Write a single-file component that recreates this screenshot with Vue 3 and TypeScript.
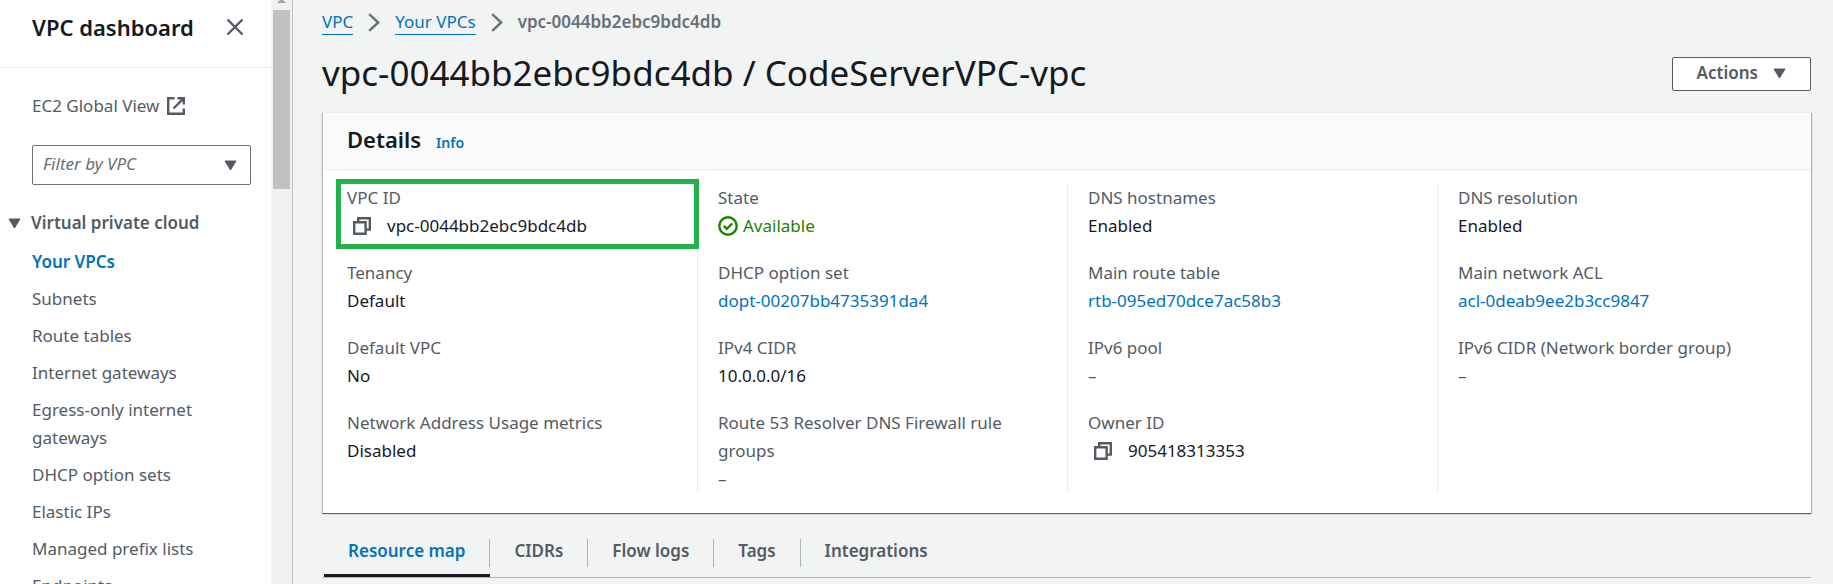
<script setup lang="ts">
import { ref } from 'vue'

interface Field {
  label: string
  value: string
  kind?: 'link' | 'copy' | 'status' | 'empty'
  highlighted?: boolean
}

const navItems: string[] = [
  'Your VPCs',
  'Subnets',
  'Route tables',
  'Internet gateways',
  'Egress-only internet gateways',
  'DHCP option sets',
  'Elastic IPs',
  'Managed prefix lists',
  'Endpoints',
]

const columns: Field[][] = [
  [
    { label: 'VPC ID', value: 'vpc-0044bb2ebc9bdc4db', kind: 'copy', highlighted: true },
    { label: 'Tenancy', value: 'Default' },
    { label: 'Default VPC', value: 'No' },
    { label: 'Network Address Usage metrics', value: 'Disabled' },
  ],
  [
    { label: 'State', value: 'Available', kind: 'status' },
    { label: 'DHCP option set', value: 'dopt-00207bb4735391da4', kind: 'link' },
    { label: 'IPv4 CIDR', value: '10.0.0.0/16' },
    { label: 'Route 53 Resolver DNS Firewall rule groups', value: '–', kind: 'empty' },
  ],
  [
    { label: 'DNS hostnames', value: 'Enabled' },
    { label: 'Main route table', value: 'rtb-095ed70dce7ac58b3', kind: 'link' },
    { label: 'IPv6 pool', value: '–', kind: 'empty' },
    { label: 'Owner ID', value: '905418313353', kind: 'copy' },
  ],
  [
    { label: 'DNS resolution', value: 'Enabled' },
    { label: 'Main network ACL', value: 'acl-0deab9ee2b3cc9847', kind: 'link' },
    { label: 'IPv6 CIDR (Network border group)', value: '–', kind: 'empty' },
  ],
]

const tabs: string[] = ['Resource map', 'CIDRs', 'Flow logs', 'Tags', 'Integrations']
const activeTab = ref('Resource map')
const activeNav = ref('Your VPCs')
const filter = ref('')
const sectionOpen = ref(true)

function copy(text: string): void {
  navigator.clipboard?.writeText(text)
}
</script>

<template>
  <div class="app">
    <aside class="sidebar">
      <div class="side-content">
        <header class="side-header">
          <h2>VPC dashboard</h2>
          <button class="icon-button" type="button" aria-label="Close navigation">
            <svg width="18" height="18" viewBox="0 0 18 18"><path d="M1.5 1.5l15 15M16.5 1.5l-15 15" fill="none" stroke="currentColor" stroke-width="2.4" /></svg>
          </button>
        </header>
        <a class="global" href="#">
          <span>EC2 Global View</span>
          <svg width="18" height="18" viewBox="0 0 18 18" fill="none" stroke="currentColor" stroke-width="2.4"><path d="M7.5 1.2H1.2v15.6h15.6v-5.3M10.5 1.2h6.3v6.3M16.6 1.4L6.5 11.5" /></svg>
        </a>
        <div class="filter">
          <select v-model="filter" aria-label="Filter by VPC">
            <option value="">Filter by VPC</option>
          </select>
          <svg width="13" height="11" viewBox="0 0 13 11"><path d="M1 1h11L6.5 10z" fill="currentColor" stroke="currentColor" stroke-linejoin="round" /></svg>
        </div>
        <button class="section" type="button" :aria-expanded="sectionOpen" @click="sectionOpen = !sectionOpen">
          <svg width="13" height="11" viewBox="0 0 13 11"><path d="M1 1h11L6.5 10z" fill="currentColor" stroke="currentColor" stroke-linejoin="round" /></svg>
          Virtual private cloud
        </button>
        <ul v-if="sectionOpen" class="nav">
          <li v-for="item in navItems" :key="item">
            <a href="#" :class="{ current: item === activeNav }" @click.prevent="activeNav = item">{{ item }}</a>
          </li>
        </ul>
      </div>
      <div class="scrollbar" aria-hidden="true">
        <svg width="9" height="3" viewBox="0 0 9 3"><path d="M3 0h3l3 3H0z" fill="#a3a3a3" /></svg>
        <div class="thumb"></div>
      </div>
    </aside>

    <main>
      <nav class="crumbs" aria-label="Breadcrumbs">
        <a href="#">VPC</a>
        <svg width="12" height="19" viewBox="0 0 12 19"><path d="M1.2 1.2L10.2 9.5L1.2 17.8" fill="none" stroke="currentColor" stroke-width="2.4" /></svg>
        <a href="#">Your VPCs</a>
        <svg width="12" height="19" viewBox="0 0 12 19"><path d="M1.2 1.2L10.2 9.5L1.2 17.8" fill="none" stroke="currentColor" stroke-width="2.4" /></svg>
        <span>vpc-0044bb2ebc9bdc4db</span>
      </nav>

      <div class="title-row">
        <h1>vpc-0044bb2ebc9bdc4db / CodeServerVPC-vpc</h1>
        <button class="actions" type="button">
          Actions
          <svg width="13" height="11" viewBox="0 0 13 11"><path d="M1 1h11L6.5 10z" fill="currentColor" stroke="currentColor" stroke-linejoin="round" /></svg>
        </button>
      </div>

      <section class="card">
        <header class="card-header">
          <h2>Details</h2>
          <a href="#">Info</a>
        </header>
        <div class="columns">
          <dl v-for="(column, index) in columns" :key="index" class="column">
            <div v-for="field in column" :key="field.label" class="field" :class="{ highlighted: field.highlighted }">
              <dt>{{ field.label }}</dt>
              <dd :class="field.kind">
                <a v-if="field.kind === 'link'" href="#">{{ field.value }}</a>
                <template v-else>
                  <button v-if="field.kind === 'copy'" class="icon-button" type="button" :aria-label="`Copy ${field.label}`" @click="copy(field.value)">
                    <svg width="18" height="18" viewBox="0 0 18 18" fill="none" stroke="currentColor" stroke-width="2.4"><path d="M1.2 5.2h11.4v11.6H1.2zM5.2 5.2V1.2h11.6v11.4h-4.2" /></svg>
                  </button>
                  <svg v-if="field.kind === 'status'" width="20" height="20" viewBox="0 0 20 20" fill="none" stroke="currentColor" stroke-width="2.4"><circle cx="10" cy="10" r="8.7" /><path d="M5.8 9.8l3 3 5.4-5.3" /></svg>
                  <span>{{ field.value }}</span>
                </template>
              </dd>
            </div>
          </dl>
        </div>
      </section>

      <div class="tabs" role="tablist">
        <button
          v-for="tab in tabs"
          :key="tab"
          type="button"
          role="tab"
          :aria-selected="tab === activeTab"
          :class="{ active: tab === activeTab }"
          @click="activeTab = tab"
        >
          <span>{{ tab }}</span>
        </button>
      </div>
    </main>
  </div>
</template>

<style>
body {
  margin: 0;
  overflow: hidden;
}
</style>

<style scoped>
.app {
  display: flex;
  height: 100vh;
  overflow: hidden;
  background: #f2f3f3;
  color: #16191f;
  font-family: 'Noto Sans', 'Open Sans', sans-serif;
  font-size: 17px;
  line-height: 28px;
}
* {
  box-sizing: border-box;
}
h1,
h2,
ul,
dl,
dd {
  margin: 0;
  padding: 0;
}
svg {
  display: block;
  flex: none;
}
a {
  color: #0073bb;
  text-decoration: none;
}
button,
select {
  font: inherit;
  color: #545b64;
  cursor: pointer;
}
.icon-button {
  display: flex;
  padding: 0;
  border: 0;
  background: none;
}

.sidebar {
  display: flex;
  flex: none;
  width: 293px;
  overflow: hidden;
  border-right: 1px solid #bcc4c6;
  background: #fff;
}
.side-content {
  flex: 1;
  color: #545b64;
}
.side-header {
  display: flex;
  align-items: center;
  justify-content: space-between;
  height: 68px;
  padding: 0 27px 13px 32px;
  border-bottom: 1px solid #eaeded;
}
.side-header h2 {
  color: #16191f;
  font-size: 22px;
  font-weight: 600;
  line-height: 26px;
}
.global {
  display: flex;
  align-items: center;
  gap: 8px;
  margin: 24px 20px 0 32px;
  color: #545b64;
}
.filter {
  position: relative;
  margin: 25px 20px 0 32px;
}
.filter select {
  display: block;
  width: 100%;
  height: 40px;
  padding: 0 32px 2px 10px;
  border: 1px solid #687078;
  border-radius: 2px;
  background: #fff;
  color: #687078;
  font-style: italic;
  appearance: none;
}
.filter svg {
  position: absolute;
  top: 15px;
  right: 14px;
  pointer-events: none;
}
.section {
  display: flex;
  align-items: center;
  gap: 10px;
  margin-top: 24px;
  padding: 0 0 0 8px;
  border: 0;
  background: none;
  font-weight: 600;
}
.nav {
  display: flex;
  flex-direction: column;
  gap: 9px;
  margin: 11px 20px 0 32px;
  list-style: none;
}
.nav li {
  max-width: 180px;
}
.nav a {
  display: block;
  color: #545b64;
}
.nav .current {
  color: #0073bb;
  font-weight: 600;
}
.scrollbar {
  display: flex;
  flex-direction: column;
  align-items: center;
  gap: 7px;
  width: 21px;
  background: #f1f1f1;
}
.thumb {
  width: 17px;
  height: 179px;
  background: #c1c1c1;
}

main {
  flex: 1;
  min-width: 0;
  padding: 8px 22px 0 29px;
}
.crumbs {
  display: flex;
  align-items: center;
  gap: 15px;
  height: 28px;
  color: #687078;
}
.crumbs a {
  border-bottom: 1px solid #0073bb;
  line-height: 24px;
}
.crumbs span {
  font-weight: 600;
}
.title-row {
  display: flex;
  align-items: center;
  justify-content: space-between;
  margin-top: 14px;
}
h1 {
  padding-bottom: 2px;
  font-size: 35px;
  font-weight: 400;
  line-height: 46px;
}
.actions {
  display: flex;
  align-items: center;
  gap: 15px;
  height: 34px;
  padding: 0 24px 2px;
  border: 1px solid #545b64;
  border-radius: 2px;
  background: #fff;
  font-weight: 600;
}

.card {
  margin-top: 14px;
  border-top: 1px solid #eaeded;
  border-left: 1px solid #bcc4c6;
  background: #fff;
  box-shadow: 0 1px 1px rgba(0, 28, 36, 0.5), 1px 1px 1px rgba(0, 28, 36, 0.25);
}
.card-header {
  display: flex;
  align-items: baseline;
  gap: 15px;
  height: 57px;
  padding: 12px 24px 0;
  border-bottom: 1px solid #eaeded;
  background: #fafafa;
}
.card-header h2 {
  font-size: 22px;
  font-weight: 600;
}
.card-header a {
  font-size: 14px;
  font-weight: 600;
}
.columns {
  display: grid;
  grid-template-columns: repeat(4, 1fr);
  padding: 14px 4px 20px;
}
.column {
  display: flex;
  flex-direction: column;
  gap: 19px;
  padding: 0 20px;
}
.column + .column {
  border-left: 1px solid #eaeded;
}
.field {
  position: relative;
}
.highlighted::after {
  position: absolute;
  inset: -5px -22px -9px -11px;
  border: 5px solid #22b14c;
  content: '';
  pointer-events: none;
}
dt,
.empty {
  color: #545b64;
}
.copy {
  display: flex;
  align-items: center;
  gap: 16px;
  padding-left: 6px;
}
.status {
  display: flex;
  align-items: center;
  gap: 5px;
  color: #1d8102;
}

.tabs {
  display: flex;
  margin-top: 22px;
  padding-left: 2px;
  border-bottom: 1px solid #aab7b8;
}
.tabs button {
  padding: 4px 0 7px;
  border: 0;
  border-bottom: 3px solid transparent;
  background: none;
  font-weight: 600;
}
.tabs span {
  display: block;
  padding: 0 24px 4px;
  border-right: 1px solid #aab7b8;
  line-height: 24px;
}
.tabs button:last-child span {
  border-right: 0;
}
.tabs .active {
  border-bottom-color: #16191f;
  color: #0073bb;
}
</style>
